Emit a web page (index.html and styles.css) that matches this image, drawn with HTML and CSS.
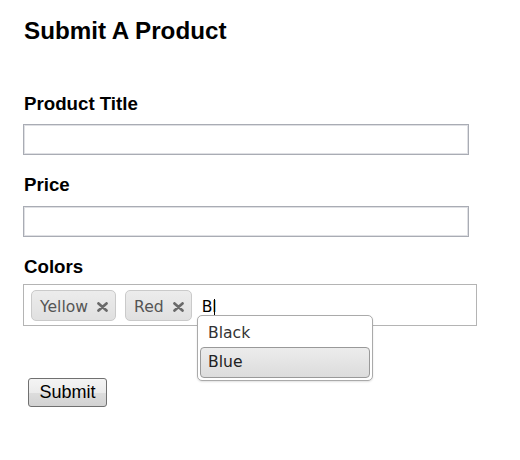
FILE: index.html
```html
<!DOCTYPE html>
<html>
<head>
<meta charset="utf-8">
<title>Submit A Product</title>
<link rel="stylesheet" href="styles.css">
</head>
<body>
<div class="page">
  <h1 class="title">Submit A Product</h1>
  <form class="form">
    <div class="field field-first">
      <label class="label">Product Title</label>
      <input class="text-input" type="text">
    </div>
    <div class="field">
      <label class="label">Price</label>
      <input class="text-input" type="text">
    </div>
    <div class="field">
      <label class="label">Colors</label>
      <div class="tagbox">
        <span class="tag">Yellow<svg class="tag-x" width="11" height="10" viewBox="0 0 11 10"><path d="M1.5 1.4 L9.5 8.6 M9.5 1.4 L1.5 8.6" stroke="#6a6a6a" stroke-width="2.7" stroke-linecap="round"/></svg></span>
        <span class="tag">Red<svg class="tag-x" width="11" height="10" viewBox="0 0 11 10"><path d="M1.5 1.4 L9.5 8.6 M9.5 1.4 L1.5 8.6" stroke="#6a6a6a" stroke-width="2.7" stroke-linecap="round"/></svg></span>
        <span class="typed">Bl<span class="caret"></span></span>
        <ul class="dropdown">
          <li class="option">Black</li>
          <li class="option option-active">Blue</li>
        </ul>
      </div>
    </div>
    <button class="submit" type="button">Submit</button>
  </form>
</div>
</body>
</html>
```

FILE: styles.css
```css
html, body {
  margin: 0;
  padding: 0;
  background: #ffffff;
}

.page {
  padding: 17px 0 0 23px;
  font-family: "Liberation Sans", Arial, sans-serif;
  color: #000;
}

.title {
  margin: 0 0 0 1px;
  font-size: 24.2px;
  line-height: 28px;
  font-weight: bold;
}

.form {
  display: flex;
  flex-direction: column;
  align-items: flex-start;
}

.field {
  display: flex;
  flex-direction: column;
  align-items: flex-start;
  margin-top: 19px;
}

.field-first {
  margin-top: 48px;
}

.label {
  margin-left: 1px;
  font-size: 18.7px;
  line-height: 22px;
  font-weight: bold;
}

.text-input {
  box-sizing: border-box;
  display: block;
  width: 446px;
  height: 31px;
  margin: 9px 0 0;
  padding: 0 4px;
  border: 1px solid #a9acb4;
  box-shadow: inset 0 0 0 1px #dfe0e4;
  background: #fff;
  font: 15px "DejaVu Sans", sans-serif;
  outline: none;
}

.field + .field .text-input {
  margin-top: 10px;
}

.tagbox {
  position: relative;
  box-sizing: border-box;
  width: 454px;
  height: 42px;
  margin-top: 6px;
  padding: 5px 7px;
  border: 1px solid #b4b4b4;
  display: flex;
  align-items: flex-start;
  gap: 9px;
  font-family: "DejaVu Sans", Verdana, sans-serif;
  font-size: 15.6px;
}

.tag {
  box-sizing: border-box;
  height: 31px;
  display: inline-flex;
  align-items: flex-start;
  padding: 2px 7px 0 8px;
  border: 1px solid #cacaca;
  border-radius: 5px;
  background: linear-gradient(#ececec, #e0e0e0);
  color: #555;
  line-height: 28px;
}

.tag-x {
  display: block;
  margin: 9px 0 0 9px;
}

.typed {
  margin-left: 1px;
  height: 31px;
  display: inline-flex;
  align-items: flex-start;
  padding-top: 3px;
  box-sizing: border-box;
  color: #000;
  line-height: 28px;
}

.caret {
  display: inline-block;
  width: 1px;
  height: 18px;
  margin: 6px 0 0 -3px;
  background: #000;
}

.dropdown {
  position: absolute;
  left: 173px;
  top: 30px;
  z-index: 2;
  box-sizing: border-box;
  width: 176px;
  margin: 0;
  padding: 0 2px 2px;
  list-style: none;
  background: #fff;
  border: 1px solid #aaaaaa;
  border-radius: 5px;
  box-shadow: 0 1px 2px rgba(0, 0, 0, 0.12);
}

.option {
  box-sizing: border-box;
  height: 31px;
  padding: 3px 7px 0;
  border: 1px solid transparent;
  border-radius: 4px;
  line-height: 26px;
  color: #333;
}

.option-active {
  padding-top: 1px;
  border-color: #999;
  background: linear-gradient(#ececec, #dcdcdc);
  color: #222;
}

.submit {
  box-sizing: border-box;
  width: 79px;
  height: 29px;
  margin: 52px 0 0 5px;
  padding: 0;
  border: 1px solid #707070;
  border-radius: 3px;
  background: linear-gradient(#f4f4f4 0%, #ebebeb 50%, #dddddd 51%, #d2d2d2 100%);
  font-family: "Liberation Sans", Arial, sans-serif;
  font-size: 18px;
  color: #000;
}
```
